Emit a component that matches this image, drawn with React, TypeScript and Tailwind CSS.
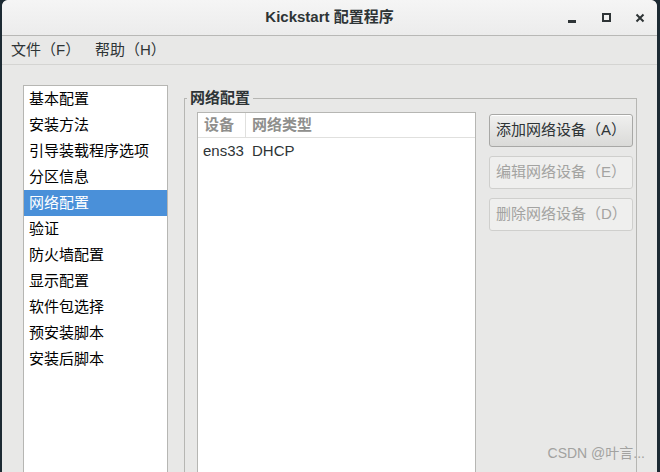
import React from "react";

const font = { fontFamily: "'Liberation Sans', 'Noto Sans CJK SC', sans-serif" };

const sections = [
	"基本配置",
	"安装方法",
	"引导装载程序选项",
	"分区信息",
	"网络配置",
	"验证",
	"防火墙配置",
	"显示配置",
	"软件包选择",
	"预安装脚本",
	"安装后脚本",
];

function TitleBar() {
	return (
		<div className="relative flex h-[36px] shrink-0 items-center justify-center rounded-t-[6px] border-b border-[#b8b8b6] bg-gradient-to-b from-[#f5f5f5] to-[#ececec]">
			<span className="text-[15px] font-bold text-[#2e3436]">Kickstart 配置程序</span>
			<div className="absolute right-0 top-0 flex h-full items-center">
				{/* 最小化 */}
				<div className="flex h-[30px] w-[34px] items-center justify-center">
					<div className="mt-[8px] h-[3px] w-[8px] bg-[#2e3436]" />
				</div>
				{/* 最大化 */}
				<div className="flex h-[30px] w-[34px] items-center justify-center">
					<div className="h-[9px] w-[9px] border-[2px] border-[#2e3436]" />
				</div>
				{/* 关闭 */}
				<div className="flex h-[30px] w-[34px] items-center justify-center">
					<svg width="10" height="10" viewBox="0 0 10 10">
						<path d="M1.5 1.5 L8.5 8.5 M8.5 1.5 L1.5 8.5" stroke="#2e3436" strokeWidth="2" />
					</svg>
				</div>
			</div>
		</div>
	);
}

function MenuBar() {
	return (
		<div className="flex h-[29px] shrink-0 items-center border-b border-[#d4d4d2] bg-[#e8e8e7] pl-[9px] pt-[1px] text-[15px] text-[#2e3436]">
			<span className="w-[84px]">文件（F）</span>
			<span>帮助（H）</span>
		</div>
	);
}

function SideList() {
	return (
		<div className="h-[400px] w-[145px] shrink-0 border border-[#b6b6b3] bg-white">
			{sections.map((name) => {
				const active = name === "网络配置";
				return (
					<div
						key={name}
						className={`flex h-[26px] items-center pl-[5px] text-[15px] ${active ? "bg-[#4a90d9] text-white" : "text-black"}`}
					>
						{name}
					</div>
				);
			})}
		</div>
	);
}

function ActionButton({ label, enabled }: { label: string; enabled?: boolean }) {
	return (
		<div
			className={`flex h-[33px] items-center rounded-[3px] border pl-[6px] text-[15px] ${
				enabled
					? "border-[#a8a8a6] bg-gradient-to-b from-[#f0f0ef] to-[#dadad8] text-[#2e3436] shadow-[inset_0_1px_0_#ffffff]"
					: "border-[#cfcfcd] bg-[#efefee] text-[#a3a3a1]"
			}`}
		>
			{label}
		</div>
	);
}

function NetworkFrame() {
	return (
		<fieldset className="m-0 ml-[16px] flex min-w-0 flex-1 gap-[13px] border border-b-0 border-[#b6b6b3] pb-0 pl-[12px] pr-[2px] pt-[5px]">
			<legend className="ml-[-10px] px-[3px] text-[15px] font-bold leading-[18px] text-[#2e3436]">网络配置</legend>
			{/* 设备列表 */}
			<div className="h-[400px] w-[279px] shrink-0 border border-b-0 border-[#b6b6b3] bg-white">
				<div className="flex h-[25px] items-center border-b border-[#e0e0de] text-[15px] font-bold text-[#8f8f8d]">
					<div className="flex h-full w-[48px] items-center border-r border-[#e0e0de] pl-[6px]">设备</div>
					<div className="pl-[6px]">网络类型</div>
				</div>
				<div className="flex h-[27px] items-center text-[15px] text-[#2e3436]">
					<div className="w-[49px] pl-[5px]">ens33</div>
					<div className="pl-[5px]">DHCP</div>
				</div>
			</div>
			{/* 按钮 */}
			<div className="flex w-[144px] shrink-0 flex-col gap-[9px] pt-[2px]">
				<ActionButton label="添加网络设备（A）" enabled />
				<ActionButton label="编辑网络设备（E）" />
				<ActionButton label="删除网络设备（D）" />
			</div>
		</fieldset>
	);
}

export default function App() {
	return (
		<div className="h-[472px] w-[660px] overflow-hidden bg-[#1c2a33] px-[2px] pr-[3px]" style={font}>
			<div className="relative flex h-full flex-col overflow-hidden rounded-t-[6px] bg-[#e8e8e7]">
				<TitleBar />
				<MenuBar />
				<div className="flex min-h-0 flex-1 pl-[21px] pt-[20px]">
					<SideList />
					<div className="mt-[4px] flex flex-1 pr-[20px]">
						<NetworkFrame />
					</div>
				</div>
				<div className="absolute bottom-[8px] right-[12px] text-[14px] text-[#a2a2a0]">CSDN @叶言...</div>
			</div>
		</div>
	);
}
